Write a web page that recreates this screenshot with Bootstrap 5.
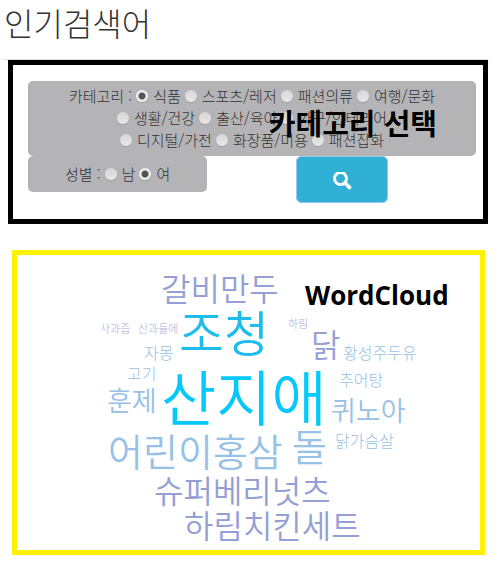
<!DOCTYPE html>
<html lang="ko">
<head>
<meta charset="utf-8">
<meta name="viewport" content="width=device-width, initial-scale=1">
<title>인기검색어</title>
<link href="https://cdn.jsdelivr.net/npm/bootstrap@5.3.0/dist/css/bootstrap.min.css" rel="stylesheet">
<style>
body { font-family: "Noto Sans CJK KR", sans-serif; font-weight: 300; font-size: 15px; line-height: 22px; color: #333; }
.page-title { font-size: 32px; line-height: 44px; font-weight: 300; padding: 0 4px; margin-bottom: 15px; }
.rule { margin: 0 12px 0 3px; border-top: 1px solid #ddd; }
.filter-box { border: 5px solid #000; margin: 0 13px 26px 8px; padding: 16px 7px 16px 15px; }
.panel-gray { background: #b4b4b6; border-radius: 5px; }
.category { padding: 4px 0 5px; }
.gender { padding: 7px 0; width: 40%; }
.choices { column-gap: 4px; }
.choices label { display: inline-flex; align-items: center; gap: 5px; white-space: nowrap; }
.choices input { appearance: none; width: 12px; height: 12px; margin: 0; border-radius: 50%; background: linear-gradient(#d6d6d6, #e8e8e8); box-shadow: 0 1px 1px #a0a0a2; }
.choices input:checked { background: radial-gradient(circle, #555 0 3px, #eee 4px); }
.overlay-title { position: absolute; top: 41px; right: 46px; font-size: 29px; line-height: 32px; font-weight: 700; color: #000; white-space: nowrap; pointer-events: none; }
.btn-search { width: 92px; height: 47px; background: #31b0d5; border: 1px solid #4a90e2; border-radius: 6px; outline: 1px solid #9cc4f5; outline-offset: -1px; }
.btn-search:hover { background: #269abc; }
.cloud-box { border: 5px solid #fff200; margin: 0 16px 8px 12px; }
.cloud-box svg { display: block; width: 100%; height: auto; }
.cloud-title { font: 700 26px "Open Sans", "Noto Sans", sans-serif; fill: #000; }
.s11 { font-size: 11px; } .s16 { font-size: 16px; } .s27 { font-size: 27px; } .s32 { font-size: 32px; }
.s38 { font-size: 38px; } .s49 { font-size: 49px; } .s60 { font-size: 60px; }
.s27, .s32, .s38, .s49, .s60 { font-weight: 350; }
.violet { fill: #949fd6; } .lilac { fill: #a9abe0; } .sky { fill: #97c1e6; } .cyan { fill: #1cbdec; } .bright { fill: #06c8fc; }
</style>
<script src="https://cdn.jsdelivr.net/npm/bootstrap@5.3.0/dist/js/bootstrap.bundle.min.js"></script>
</head>
<body>
<h1 class="page-title">인기검색어</h1>
<div class="rule"></div>
<form class="filter-box position-relative">
  <div class="panel-gray category" role="group" aria-label="카테고리">
    <div class="choices d-flex justify-content-center">
      <span>카테고리 :</span>
      <label><input type="radio" name="category" checked>식품</label>
      <label><input type="radio" name="category">스포츠/레저</label>
      <label><input type="radio" name="category">패션의류</label>
      <label><input type="radio" name="category">여행/문화</label>
    </div>
    <div class="choices d-flex justify-content-center">
      <label><input type="radio" name="category">생활/건강</label>
      <label><input type="radio" name="category">출산/육아</label>
      <label><input type="radio" name="category">가구/인테리어</label>
    </div>
    <div class="choices d-flex justify-content-center">
      <label><input type="radio" name="category">디지털/가전</label>
      <label><input type="radio" name="category">화장품/미용</label>
      <label><input type="radio" name="category">패션잡화</label>
    </div>
  </div>
  <div class="d-flex align-items-start">
    <div class="panel-gray gender choices d-flex justify-content-center" role="group" aria-label="성별">
      <span>성별 :</span>
      <label><input type="radio" name="gender">남</label>
      <label><input type="radio" name="gender" checked>여</label>
    </div>
    <div class="flex-fill d-flex justify-content-center">
      <button type="button" class="btn btn-search p-0" aria-label="검색">
        <svg width="20" height="20" viewBox="0 0 20 20" fill="none" stroke="#fff" aria-hidden="true"><circle cx="8.5" cy="6.5" r="6" stroke-width="3"/><path d="M13 11L17.4 15.4" stroke-width="3.8" stroke-linecap="round"/></svg>
      </button>
    </div>
  </div>
  <div class="overlay-title">카테고리 선택</div>
</form>
<div class="cloud-box">
  <svg viewBox="0 0 463 295" role="img" aria-label="WordCloud">
    <text class="cloud-title" x="288" y="50">WordCloud</text>
    <text class="s32 violet" x="144" y="46">갈비만두</text>
    <text class="s11 lilac" x="83" y="78">사과즙</text>
    <text class="s11 lilac" x="121" y="78">산과들에</text>
    <text class="s49 cyan" x="162" y="97">조청</text>
    <text class="s11 lilac" x="271" y="73">하림</text>
    <text class="s32 violet" x="294" y="102">닭</text>
    <text class="s16 sky" x="127" y="104">자몽</text>
    <text class="s16 sky" x="326" y="104">황성주두유</text>
    <text class="s16 sky" x="110" y="125">고기</text>
    <text class="s16 sky" x="322" y="131">추어탕</text>
    <text class="s27 sky" x="90" y="156">훈제</text>
    <text class="s60 bright" x="144" y="166">산지애</text>
    <text class="s27 sky" x="314" y="166">퀴노아</text>
    <text class="s38 sky" x="91" y="211">어린이홍삼</text>
    <text class="s38 sky" x="275" y="206">돌</text>
    <text class="s16 sky" x="318" y="192">닭가슴살</text>
    <text class="s32 violet" x="137" y="248">슈퍼베리넛츠</text>
    <text class="s32 violet" x="167" y="283">하림치킨세트</text>
  </svg>
</div>
</body>
</html>
